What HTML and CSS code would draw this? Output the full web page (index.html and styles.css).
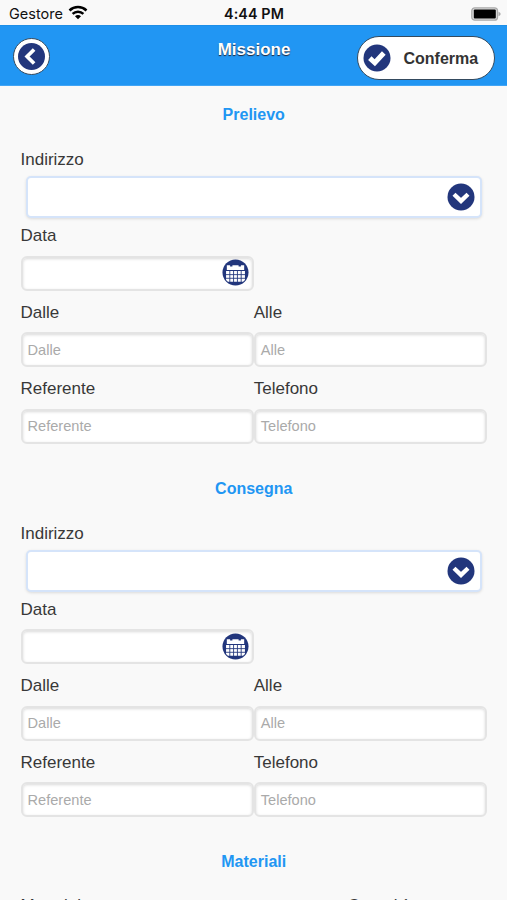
FILE: index.html
```html
<!DOCTYPE html>
<html lang="it">
<head>
<meta charset="utf-8">
<title>Missione</title>
<link rel="stylesheet" href="styles.css">
</head>
<body>
<svg class="defs" width="0" height="0">
  <symbol id="chevron" viewBox="0 0 28 28"><circle cx="14" cy="14" r="13.5" fill="#22367c"/><path d="M7 11.2 14 17.9l7-6.7" fill="none" stroke="#fff" stroke-width="4.3"/></symbol>
  <symbol id="calendar" viewBox="0 0 28 28"><circle cx="14" cy="14" r="13.5" fill="#22367c"/><path d="M5 6.4h3.4v1.4h2.4V6.4h6.4v1.4h2.4V6.4H23v5H5z" fill="#fff"/><path d="M4.2 12.5h19.6v9.2l-2 2H6.2l-2-2z" fill="#fff"/><path d="M4 16.2h20M4 20h20M8.1 12v12M12 12v12M16 12v12M19.9 12v12" stroke="#22367c" stroke-width=".9"/></symbol>
</svg>
<div class="status">
  <div class="carrier"><span>Gestore</span>
    <svg width="20" height="15" viewBox="0 0 20 15"><g fill="none" stroke="#000" stroke-width="2.5"><path d="M1.5 5.5a12.3 12.3 0 0 1 17 0"/><path d="M4.6 8.8a7.8 7.8 0 0 1 10.8 0"/></g><path d="M7 11.2a4.2 4.2 0 0 1 6 0l-3 3z"/></svg>
  </div>
  <div class="time">4:44 PM</div>
  <svg class="battery" width="30" height="14" viewBox="0 0 30 14"><rect x=".8" y=".8" width="25.7" height="12.4" rx="3" fill="#ddd" stroke="#aaa" stroke-width="1.3"/><rect x="2.8" y="2.5" width="22" height="9" rx="1" fill="#000"/><path d="M27.5 4.7q2.2 1 2.2 2.3t-2.2 2.3z" fill="#aaa"/></svg>
</div>
<header class="header">
  <button class="back" aria-label="Indietro"><svg width="27" height="27" viewBox="0 0 27 27"><circle cx="13.5" cy="13.5" r="13.5" fill="#22367c"/><path d="m16.1 6.5-7 7 7 7" fill="none" stroke="#fff" stroke-width="3.7"/></svg></button>
  <h1>Missione</h1>
  <button class="confirm"><svg width="28" height="28" viewBox="0 0 28 28"><circle cx="14" cy="14" r="13.5" fill="#22367c"/><path d="m6.8 14.2 5 4.6 9-9.8" fill="none" stroke="#fff" stroke-width="5"/></svg><span>Conferma</span></button>
</header>
<main>
  <section>
    <h2>Prelievo</h2>
    <div class="grid">
      <div class="field wide"><label>Indirizzo</label><div class="select"><svg width="28" height="28"><use href="#chevron"/></svg></div></div>
      <div class="field date"><label>Data</label><div class="input"><svg width="27" height="27"><use href="#calendar"/></svg></div></div>
      <div class="field"><label>Dalle</label><div class="input">Dalle</div></div>
      <div class="field"><label>Alle</label><div class="input">Alle</div></div>
      <div class="field"><label>Referente</label><div class="input">Referente</div></div>
      <div class="field"><label>Telefono</label><div class="input">Telefono</div></div>
    </div>
  </section>
  <section>
    <h2>Consegna</h2>
    <div class="grid">
      <div class="field wide"><label>Indirizzo</label><div class="select"><svg width="28" height="28"><use href="#chevron"/></svg></div></div>
      <div class="field date"><label>Data</label><div class="input"><svg width="27" height="27"><use href="#calendar"/></svg></div></div>
      <div class="field"><label>Dalle</label><div class="input">Dalle</div></div>
      <div class="field"><label>Alle</label><div class="input">Alle</div></div>
      <div class="field"><label>Referente</label><div class="input">Referente</div></div>
      <div class="field"><label>Telefono</label><div class="input">Telefono</div></div>
    </div>
  </section>
  <section>
    <h2>Materiali</h2>
    <div class="materials"><span>Materiale</span><span>Quantità</span></div>
  </section>
</main>
</body>
</html>
```
FILE: styles.css
```css
* { box-sizing: border-box; }
body {
  margin: 0;
  height: 900px;
  overflow: hidden;
  background: #f9f9f9;
  color: #383838;
  font-family: "Liberation Sans", Arial, sans-serif;
}
svg { display: block; flex: none; }
.defs { position: absolute; }
.status {
  display: grid;
  grid-template-columns: 1fr auto 1fr;
  align-items: center;
  height: 25px;
  padding: 2px 8px 0 9px;
  color: #111;
  font-family: Inter, sans-serif;
  font-size: 14.5px;
}
.carrier { display: flex; align-items: center; gap: 5px; }
.carrier svg { margin-top: -2px; }
.time { font-size: 14.3px; font-weight: 600; letter-spacing: .1px; }
.battery { justify-self: end; margin-right: -2px; }
.header {
  display: grid;
  grid-template-columns: 1fr auto 1fr;
  height: 61px;
  padding: 0 12px 0 13px;
  background: #2196f3;
  border-top: 1px solid #1d8fe8;
  border-bottom: 1px solid #42a5f5;
}
button { padding: 0; background: #fff; border: 1.5px solid #344a5e; font: inherit; color: #333; }
.back {
  display: flex;
  align-items: center;
  justify-content: center;
  width: 37px;
  height: 37px;
  margin-top: 12px;
  border-radius: 50%;
}
h1 { margin: 14px 0 0; color: #fff; font-size: 17px; line-height: 20px; text-shadow: 0 1px 1px #223; }
.confirm {
  display: flex;
  justify-self: end;
  align-items: center;
  gap: 12.5px;
  width: 138px;
  height: 44px;
  margin-top: 10px;
  padding-left: 5px;
  border-radius: 22px;
  font-size: 16px;
  font-weight: 700;
}
.confirm span { padding-top: 1px; }
main { padding: 0 20px 0 20.5px; }
section { padding-bottom: 12px; }
h2 { margin: 0; height: 56px; color: #2196f3; font-size: 16px; line-height: 57.5px; text-align: center; }
.grid { display: grid; grid-template-columns: 1fr 1fr; grid-auto-rows: 76.4px; }
.field { display: flex; flex-direction: column; }
.wide { grid-column: 1 / 3; }
.date { grid-column: 1; }
.date + .field { grid-column: 1; }
label { height: 37.5px; font-size: 17px; line-height: 35.2px; }
.input {
  display: flex;
  align-items: center;
  height: 35px;
  padding: 0 5px;
  border: 2px solid #e4e4e4;
  border-radius: 6px;
  background: #fff;
  box-shadow: inset 0 1px 3px rgba(0, 0, 0, .15);
  color: #aaa;
  font-size: 14.6px;
}
.date .input { justify-content: flex-end; padding: 0 3px 1px; }
.select {
  display: flex;
  align-items: center;
  justify-content: flex-end;
  height: 42px;
  margin: -3.5px 5px 0 5.5px;
  padding-right: 5px;
  border: 2px solid #d5e4fa;
  border-radius: 5px;
  background: #fff;
  box-shadow: 0 1px 3px rgba(0, 0, 0, .12);
}
.materials { display: flex; margin-top: -0.5px; font-size: 17px; line-height: 34px; }
.materials span:first-child { width: 327px; }
```
